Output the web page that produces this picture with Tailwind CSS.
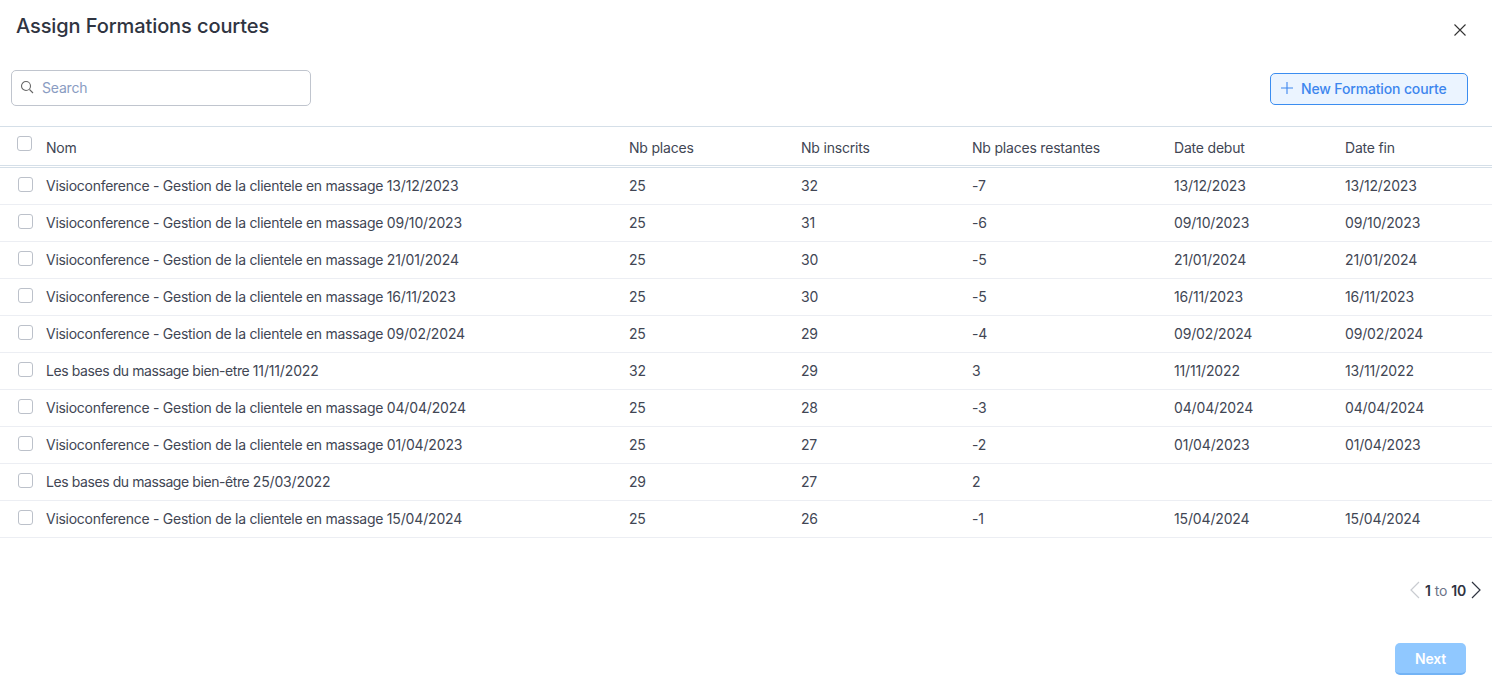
<!DOCTYPE html>
<html><head><meta charset="utf-8"><script src="https://cdn.jsdelivr.net/npm/@tailwindcss/browser@4"></script></head>
<body class="bg-white font-['Inter',sans-serif] text-[14px] tracking-[-0.2px] text-[#414654] h-[693px] w-[1492px] overflow-hidden">
<div class="flex justify-between pl-4 pr-[25px] pt-[14px] h-[70px]"><h1 class="text-[20px] leading-6 font-medium tracking-[-0.1px] text-[#2f3441]">Assign Formations courtes</h1>
<button class="self-start mt-[9px]"><svg class="block w-[14px] h-[14px]" viewBox="0 0 14 14" fill="none" stroke="#333" stroke-width="1.1"><path d="M1.5 1.5l11 11M12.5 1.5l-11 11"/></svg></button></div>
<div class="flex justify-between items-center pl-[11px] pr-6 h-[36px]">
<div class="w-[300px] h-9 border border-[#c0c5ce] rounded-[5px] flex items-center px-2 gap-2 pb-[2px]"><svg class="w-[14px] h-[14px]" viewBox="0 0 14 14" fill="none" stroke="#666" stroke-width="1.1"><circle cx="6" cy="6" r="4.5"/><path d="M9.5 9.5L13 13"/></svg><span class="text-[#8a9cc2]">Search</span></div>
<button class="mt-[2px] w-[198px] h-8 border border-[#3b8df0] bg-[#ebf4ff] rounded-[5px] text-[#3d86ee] font-medium tracking-[-0.15px] flex items-center pl-[10px] gap-2 pb-[2px]"><svg class="w-3 h-3" viewBox="0 0 12 12" stroke="#3d86ee" stroke-width="1.1"><path d="M6 0v12M0 6h12"/></svg>New Formation courte</button></div>
<div class="mt-5 border-t border-[#d5dfe8] flex items-center h-[39px] pt-[2px]"><div class="w-[46px] pl-[17px] self-start pt-[7px]"><span class="block w-[15px] h-[15px] border-[1.5px] border-[#bcc1ca] rounded-[3px]"></span></div><div class="w-[583px]">Nom</div><div class="w-[172px]">Nb places</div><div class="w-[171px]">Nb inscrits</div><div class="w-[202px]">Nb places restantes</div><div class="w-[171px]">Date debut</div><div>Date fin</div></div>
<div class="border-y border-[#d5dfe8] h-[3px]"></div>

<div class="flex items-center h-[37px] border-b border-[#eceef3] pb-[1px]"><div class="w-[46px] pl-[18px]"><span class="block w-[15px] h-[15px] border-[1.5px] border-[#bcc1ca] rounded-[3px] -mt-[2px]"></span></div><div class="w-[583px] tracking-[-0.275px]">Visioconference - Gestion de la clientele en massage <span class="tracking-[-0.15px]">13/12/2023</span></div><div class="w-[172px]">25</div><div class="w-[171px]">32</div><div class="w-[202px]">-7</div><div class="w-[171px] tracking-[-0.15px]">13/12/2023</div><div class="tracking-[-0.15px]">13/12/2023</div></div>
<div class="flex items-center h-[37px] border-b border-[#eceef3] pb-[1px]"><div class="w-[46px] pl-[18px]"><span class="block w-[15px] h-[15px] border-[1.5px] border-[#bcc1ca] rounded-[3px] -mt-[2px]"></span></div><div class="w-[583px] tracking-[-0.275px]">Visioconference - Gestion de la clientele en massage <span class="tracking-[-0.15px]">09/10/2023</span></div><div class="w-[172px]">25</div><div class="w-[171px]">31</div><div class="w-[202px]">-6</div><div class="w-[171px] tracking-[-0.15px]">09/10/2023</div><div class="tracking-[-0.15px]">09/10/2023</div></div>
<div class="flex items-center h-[37px] border-b border-[#eceef3] pb-[1px]"><div class="w-[46px] pl-[18px]"><span class="block w-[15px] h-[15px] border-[1.5px] border-[#bcc1ca] rounded-[3px] -mt-[2px]"></span></div><div class="w-[583px] tracking-[-0.275px]">Visioconference - Gestion de la clientele en massage <span class="tracking-[-0.15px]">21/01/2024</span></div><div class="w-[172px]">25</div><div class="w-[171px]">30</div><div class="w-[202px]">-5</div><div class="w-[171px] tracking-[-0.15px]">21/01/2024</div><div class="tracking-[-0.15px]">21/01/2024</div></div>
<div class="flex items-center h-[37px] border-b border-[#eceef3] pb-[1px]"><div class="w-[46px] pl-[18px]"><span class="block w-[15px] h-[15px] border-[1.5px] border-[#bcc1ca] rounded-[3px] -mt-[2px]"></span></div><div class="w-[583px] tracking-[-0.275px]">Visioconference - Gestion de la clientele en massage <span class="tracking-[-0.15px]">16/11/2023</span></div><div class="w-[172px]">25</div><div class="w-[171px]">30</div><div class="w-[202px]">-5</div><div class="w-[171px] tracking-[-0.15px]">16/11/2023</div><div class="tracking-[-0.15px]">16/11/2023</div></div>
<div class="flex items-center h-[37px] border-b border-[#eceef3] pb-[1px]"><div class="w-[46px] pl-[18px]"><span class="block w-[15px] h-[15px] border-[1.5px] border-[#bcc1ca] rounded-[3px] -mt-[2px]"></span></div><div class="w-[583px] tracking-[-0.275px]">Visioconference - Gestion de la clientele en massage <span class="tracking-[-0.15px]">09/02/2024</span></div><div class="w-[172px]">25</div><div class="w-[171px]">29</div><div class="w-[202px]">-4</div><div class="w-[171px] tracking-[-0.15px]">09/02/2024</div><div class="tracking-[-0.15px]">09/02/2024</div></div>
<div class="flex items-center h-[37px] border-b border-[#eceef3] pb-[1px]"><div class="w-[46px] pl-[18px]"><span class="block w-[15px] h-[15px] border-[1.5px] border-[#bcc1ca] rounded-[3px] -mt-[2px]"></span></div><div class="w-[583px] tracking-[-0.42px]">Les bases du massage bien-etre <span class="tracking-[-0.15px]">11/11/2022</span></div><div class="w-[172px]">32</div><div class="w-[171px]">29</div><div class="w-[202px]">3</div><div class="w-[171px] tracking-[-0.15px]">11/11/2022</div><div class="tracking-[-0.15px]">13/11/2022</div></div>
<div class="flex items-center h-[37px] border-b border-[#eceef3] pb-[1px]"><div class="w-[46px] pl-[18px]"><span class="block w-[15px] h-[15px] border-[1.5px] border-[#bcc1ca] rounded-[3px] -mt-[2px]"></span></div><div class="w-[583px] tracking-[-0.275px]">Visioconference - Gestion de la clientele en massage <span class="tracking-[-0.15px]">04/04/2024</span></div><div class="w-[172px]">25</div><div class="w-[171px]">28</div><div class="w-[202px]">-3</div><div class="w-[171px] tracking-[-0.15px]">04/04/2024</div><div class="tracking-[-0.15px]">04/04/2024</div></div>
<div class="flex items-center h-[37px] border-b border-[#eceef3] pb-[1px]"><div class="w-[46px] pl-[18px]"><span class="block w-[15px] h-[15px] border-[1.5px] border-[#bcc1ca] rounded-[3px] -mt-[2px]"></span></div><div class="w-[583px] tracking-[-0.275px]">Visioconference - Gestion de la clientele en massage <span class="tracking-[-0.15px]">01/04/2023</span></div><div class="w-[172px]">25</div><div class="w-[171px]">27</div><div class="w-[202px]">-2</div><div class="w-[171px] tracking-[-0.15px]">01/04/2023</div><div class="tracking-[-0.15px]">01/04/2023</div></div>
<div class="flex items-center h-[37px] border-b border-[#eceef3] pb-[1px]"><div class="w-[46px] pl-[18px]"><span class="block w-[15px] h-[15px] border-[1.5px] border-[#bcc1ca] rounded-[3px] -mt-[2px]"></span></div><div class="w-[583px] tracking-[-0.42px]">Les bases du massage bien-être <span class="tracking-[-0.15px]">25/03/2022</span></div><div class="w-[172px]">29</div><div class="w-[171px]">27</div><div class="w-[202px]">2</div><div class="w-[171px]"></div><div></div></div>
<div class="flex items-center h-[37px] border-b border-[#eceef3] pb-[1px]"><div class="w-[46px] pl-[18px]"><span class="block w-[15px] h-[15px] border-[1.5px] border-[#bcc1ca] rounded-[3px] -mt-[2px]"></span></div><div class="w-[583px] tracking-[-0.275px]">Visioconference - Gestion de la clientele en massage <span class="tracking-[-0.15px]">15/04/2024</span></div><div class="w-[172px]">25</div><div class="w-[171px]">26</div><div class="w-[202px]">-1</div><div class="w-[171px] tracking-[-0.15px]">15/04/2024</div><div class="tracking-[-0.15px]">15/04/2024</div></div>

<div class="flex justify-end items-center gap-[4px] pr-[10px] mt-[40px] h-6">
<svg class="w-3 h-5" viewBox="0 0 12 20" fill="none" stroke="#c9ccd1" stroke-width="1.2"><path d="M10 2L2 10l8 8"/></svg>
<span class="font-semibold text-[#2f3441]">1</span><span class="text-[#6b7488]">to</span><span class="font-semibold text-[#2f3441]">10</span>
<svg class="w-3 h-5" viewBox="0 0 12 20" fill="none" stroke="#2f3441" stroke-width="1.2"><path d="M2 2l8 8-8 8"/></svg></div>
<div class="flex justify-end pr-[26px] mt-[41px]"><button class="w-[71px] h-8 bg-[#90c8ff] border-b-2 border-[#73b3f5] rounded-[5px] text-white font-semibold">Next</button></div>
</body></html>
